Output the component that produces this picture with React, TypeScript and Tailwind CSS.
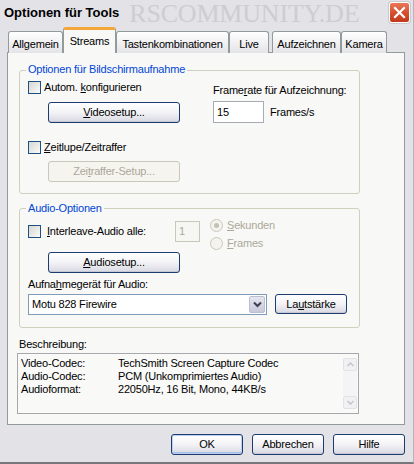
import React from "react";

function Check() {
  return (
    <span className="h-[13px] w-[13px] shrink-0 border border-[#1c5180] bg-linear-to-br from-[#d6d6d2] to-[#fafaf8]" />
  );
}

function Radio({ on }: { on?: boolean }) {
  return (
    <span className="flex h-[13px] w-[13px] shrink-0 items-center justify-center rounded-full border border-[#cac8bb] bg-[#f4f3ee]">
      {on ? <span className="h-[5px] w-[5px] rounded-full bg-[#c4c2b6]" /> : null}
    </span>
  );
}

function Btn({
  children,
  className = "",
  disabled,
  def,
}: {
  children: React.ReactNode;
  className?: string;
  disabled?: boolean;
  def?: boolean;
}) {
  const base =
    "flex shrink-0 items-center justify-center rounded-[3px] border text-[11px] leading-[13px]";
  const en =
    "border-[#1c3b6e] bg-linear-to-b from-white via-[#f3f3f6] to-[#d8d8e2] text-black shadow-[inset_0_-1px_0_#c6c6d4]";
  const dis = "border-[#c9c7ba] bg-[#f5f4ee] text-[#aca899]";
  const d = def ? "shadow-[inset_0_0_0_1px_#bccff3,inset_0_-2px_0_#a9bfe9]" : "";
  return <div className={`${base} ${disabled ? dis : en} ${d} ${className}`}>{children}</div>;
}

function Tab({ label, w, sel, className = "" }: { label: string; w: string; sel?: boolean; className?: string }) {
  if (sel) {
    return (
      <div
        className={`relative z-10 flex h-[26px] ${w} items-start justify-center rounded-t-[3px] border-x border-t-[3px] border-x-[#919b9c] border-t-[#f4a63a] bg-[#f8f8f7] pt-[5px] text-[11px] leading-[13px] ${className}`}
      >
        {label}
      </div>
    );
  }
  return (
    <div
      className={`flex h-[22px] ${w} items-start justify-center rounded-t-[3px] border-x border-t border-[#919b9c] bg-linear-to-b from-white to-[#e4e4e9] pt-[6px] text-[11px] leading-[13px] ${className}`}
    >
      {label}
    </div>
  );
}

export default function App() {
  return (
    <div className="flex h-[464px] w-[414px] flex-col overflow-hidden border-b-2 border-r border-b-[#76767c] border-r-[#b4b4ba] bg-[#e3e2e7] font-['Liberation_Sans',Arial,sans-serif] text-[11px] leading-[13px] tracking-[-0.2px] text-black">
      {/* Title bar */}
      <div className="flex h-[27px] shrink-0 items-center overflow-hidden pb-[2px] pl-[4px] pr-[3px]">
        <span className="whitespace-nowrap text-[13px] font-bold leading-[16px] tracking-normal">Optionen für Tools</span>
        <span className="ml-[10px] mt-[3px] whitespace-nowrap font-['Liberation_Serif',serif] text-[26px] leading-none tracking-[-0.2px] text-[#cdcdd2]">
          RSCOMMUNITY.DE
        </span>
        <div className="ml-auto flex h-[21px] w-[21px] shrink-0 items-center justify-center rounded-[3px] border border-white bg-linear-to-b from-[#e8775a] via-[#d8502e] to-[#c0391c] shadow-[0_0_0_1px_#c9c9cf]">
          <svg width="13" height="13" viewBox="0 0 13 13">
            <path d="M2 2 L11 11 M11 2 L2 11" stroke="white" strokeWidth="2.2" strokeLinecap="square" />
          </svg>
        </div>
      </div>

      {/* Tabs */}
      <div className="relative z-10 -mb-px flex h-[26px] shrink-0 items-end pl-[8px]">
        <Tab label="Allgemein" w="w-[55px]" />
        <Tab label="Streams" w="w-[53px]" sel />
        <Tab label="Tastenkombinationen" w="w-[113px]" />
        <Tab label="Live" w="w-[40px]" />
        <Tab label="Aufzeichnen" w="w-[69px]" className="ml-[3px]" />
        <Tab label="Kamera" w="w-[46px]" />
      </div>

      {/* Panel */}
      <div className="ml-[7px] flex h-[373px] w-[398px] shrink-0 flex-col border border-[#919b9c] bg-[#f8f8f7] pl-[11px]">
        {/* Group 1 */}
        <div className="relative mt-[17px] flex h-[124px] w-[341px] rounded-[3px] border border-[#d0d0bf] pl-[8px] pt-[10px]">
          <span className="absolute -top-[8px] left-[6px] bg-[#f8f8f7] px-[2px] text-[#0046d5]">
            Optionen für Bildschirmaufnahme
          </span>
          <div className="flex w-[185px] flex-col">
            <div className="flex h-[13px] items-center">
              <Check />
              <span className="ml-[3px]">
                Autom. <u>k</u>onfigurieren
              </span>
            </div>
            <Btn className="ml-[20px] mt-[8px] h-[21px] w-[132px]">
              <span>
                <u>V</u>ideosetup...
              </span>
            </Btn>
            <div className="mt-[18px] flex h-[13px] items-center">
              <Check />
              <span className="ml-[3px]">
                <u>Z</u>eitlupe/Zeitraffer
              </span>
            </div>
            <Btn disabled className="ml-[20px] mt-[7px] h-[21px] w-[132px]">
              <span>
                Zei<u>t</u>raffer-Setup...
              </span>
            </Btn>
          </div>
          <div className="flex flex-col pt-[3px]">
            <span>
              Frame<u>r</u>ate für Aufzeichnung:
            </span>
            <div className="mt-[4px] flex items-center">
              <div className="flex h-[22px] w-[51px] items-center border border-[#a5acb5] bg-white pl-[3px]">15</div>
              <span className="ml-[6px]">Frames/s</span>
            </div>
          </div>
        </div>

        {/* Group 2 */}
        <div className="relative mt-[14px] flex h-[120px] w-[341px] flex-col rounded-[3px] border border-[#d0d0bf] pl-[8px] pt-[10px]">
          <span className="absolute -top-[7px] left-[6px] bg-[#f8f8f7] px-[2px] text-[#0046d5]">Audio-Optionen</span>
          <div className="flex h-[31px] items-start">
            <div className="mt-[6px] flex w-[147px] items-center">
              <Check />
              <span className="ml-[6px]">
                <u>I</u>nterleave-Audio alle:
              </span>
            </div>
            <div className="mt-[2px] flex h-[21px] w-[25px] items-center border border-[#c9c7ba] bg-[#f6f6f3] pl-[3px] text-[#aca899]">
              1
            </div>
            <div className="ml-[10px] flex flex-col text-[#aca899]">
              <div className="flex h-[13px] items-center">
                <Radio on />
                <span className="ml-[4px]">
                  <u>S</u>ekunden
                </span>
              </div>
              <div className="mt-[5px] flex h-[13px] items-center">
                <Radio />
                <span className="ml-[4px]">
                  <u>F</u>rames
                </span>
              </div>
            </div>
          </div>
          <Btn className="ml-[20px] mt-[2px] h-[21px] w-[132px]">
            <span>
              <u>A</u>udiosetup...
            </span>
          </Btn>
          <span className="mt-[5px]">
            Aufna<u>h</u>megerät für Audio:
          </span>
          <div className="mt-[3px] flex items-start">
            <div className="flex h-[21px] w-[239px] items-center border border-[#7f9db9] bg-white pl-[3px] pr-px">
              <span className="flex-1">Motu 828 Firewire</span>
              <div className="flex h-[17px] w-[16px] items-center justify-center rounded-[2px] border border-[#b8c0d6] bg-linear-to-b from-[#e6e6f0] to-[#c8c8d8]">
                <svg width="9" height="7" viewBox="0 0 9 7">
                  <path d="M1 1.5 L4.5 5 L8 1.5" fill="none" stroke="#3a4250" strokeWidth="2" />
                </svg>
              </div>
            </div>
            <Btn className="ml-[8px] h-[20px] w-[72px]">
              <span>
                La<u>u</u>tstärke
              </span>
            </Btn>
          </div>
        </div>

        {/* Description */}
        <span className="mt-[10px]">Beschreibung:</span>
        <div className="-ml-[2px] mt-[2px] flex h-[61px] w-[342px] border border-[#a7a7ad] bg-[#f9f9f8]">
          <div className="flex flex-1 flex-col pl-[3px] pt-[3px]">
            <div className="flex">
              <span className="w-[97px]">Video-Codec:</span>
              <span>TechSmith Screen Capture Codec</span>
            </div>
            <div className="flex">
              <span className="w-[97px]">Audio-Codec:</span>
              <span>PCM (Unkomprimiertes Audio)</span>
            </div>
            <div className="flex">
              <span className="w-[97px]">Audioformat:</span>
              <span>22050Hz, 16 Bit, Mono, 44KB/s</span>
            </div>
          </div>
          <div className="mr-[1px] flex w-[14px] flex-col py-[4px]">
            <div className="flex h-[13px] items-center justify-center rounded-[2px] border border-[#e2e2e6] bg-[#f1f1f4]">
              <svg width="7" height="5" viewBox="0 0 7 5">
                <path d="M0.5 4 L3.5 1 L6.5 4" fill="none" stroke="#c4c4cc" strokeWidth="1.5" />
              </svg>
            </div>
            <div className="flex-1 bg-[#f4f4f6]" />
            <div className="flex h-[13px] items-center justify-center rounded-[2px] border border-[#e2e2e6] bg-[#f1f1f4]">
              <svg width="7" height="5" viewBox="0 0 7 5">
                <path d="M0.5 1 L3.5 4 L6.5 1" fill="none" stroke="#c4c4cc" strokeWidth="1.5" />
              </svg>
            </div>
          </div>
        </div>
      </div>

      {/* Buttons */}
      <div className="mt-[9px] flex justify-end gap-[9px] pr-[8px]">
        <Btn def className="h-[21px] w-[72px]">OK</Btn>
        <Btn className="h-[21px] w-[72px]">Abbrechen</Btn>
        <Btn className="h-[21px] w-[72px]">Hilfe</Btn>
      </div>
    </div>
  );
}
